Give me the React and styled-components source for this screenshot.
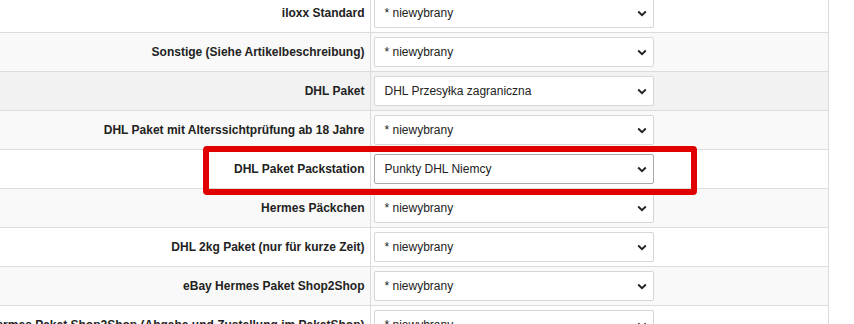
import React from 'react';
import styled, { createGlobalStyle } from 'styled-components';

const GlobalStyle = createGlobalStyle`
  html, body {
    margin: 0;
    padding: 0;
    background: #fff;
    overflow: hidden;
  }
  body {
    font-family: "Liberation Sans", Arial, Helvetica, sans-serif;
    color: #222;
  }
`;

const Page = styled.div`
  position: relative;
  width: 869px;
  margin-left: -40px;
  margin-top: -6px;
`;

const Table = styled.table`
  width: 100%;
  table-layout: fixed;
  border-collapse: collapse;
  border-right: 1px solid #dcdcdc;
`;

const LabelCol = styled.col`
  width: 410px;
`;

const Row = styled.tr`
  background: ${props => props.$bg || '#fff'};
  border-bottom: 1px solid #dcdcdc;
`;

const LabelCell = styled.td`
  height: 38px;
  padding: 0 5px 0 0;
  text-align: right;
  font-weight: bold;
  font-size: 12px;
  color: #222;
  white-space: nowrap;
  overflow: hidden;
  direction: rtl;
  vertical-align: middle;
  border-right: 1px solid #dcdcdc;
`;

const LabelText = styled.span`
  direction: ltr;
  unicode-bidi: isolate;
`;

const ValueCell = styled.td`
  height: 38px;
  padding: 0 0 0 3px;
  vertical-align: middle;
`;

const SelectBox = styled.div`
  box-sizing: border-box;
  width: 280px;
  height: 30px;
  display: flex;
  align-items: center;
  justify-content: space-between;
  padding: 0 6px 0 10px;
  background: #fff;
  border: 1px solid ${props => (props.$active ? '#a9a9a9' : '#d6d6d6')};
  border-radius: 2px;
  font-size: 12px;
  color: #222;
`;

const Highlight = styled.div`
  position: absolute;
  left: 243px;
  top: 152px;
  width: 494px;
  height: 49px;
  box-sizing: border-box;
  border: 6px solid #e00000;
  border-radius: 4px;
  pointer-events: none;
`;

const Chevron = () => (
  <svg width="10" height="7" viewBox="0 0 10 7">
    <polyline points="1.2,1.5 5,5.2 8.8,1.5" fill="none" stroke="#222" strokeWidth="1.9" />
  </svg>
);

const rows = [
  { label: 'iloxx Standard', value: '* niewybrany', bg: '#fff' },
  { label: 'Sonstige (Siehe Artikelbeschreibung)', value: '* niewybrany', bg: '#f9f9f9' },
  { label: 'DHL Paket', value: 'DHL Przesyłka zagraniczna', bg: '#f2f2f2' },
  { label: 'DHL Paket mit Alterssichtprüfung ab 18 Jahre', value: '* niewybrany', bg: '#f9f9f9' },
  { label: 'DHL Paket Packstation', value: 'Punkty DHL Niemcy', bg: '#fff', active: true },
  { label: 'Hermes Päckchen', value: '* niewybrany', bg: '#f9f9f9' },
  { label: 'DHL 2kg Paket (nur für kurze Zeit)', value: '* niewybrany', bg: '#fff' },
  { label: 'eBay Hermes Paket Shop2Shop', value: '* niewybrany', bg: '#f9f9f9' },
  { label: 'Hermes Paket Shop2Shop (Abgabe und Zustellung im PaketShop)', value: '* niewybrany', bg: '#fff' },
];

export default function App() {
  return (
    <>
      <GlobalStyle />
      <Page>
        <Table>
          <colgroup>
            <LabelCol />
            <col />
          </colgroup>
          <tbody>
            {rows.map(r => (
              <Row key={r.label} $bg={r.bg}>
                <LabelCell>
                  <LabelText>{r.label}</LabelText>
                </LabelCell>
                <ValueCell>
                  <SelectBox $active={r.active}>
                    <span>{r.value}</span>
                    <Chevron />
                  </SelectBox>
                </ValueCell>
              </Row>
            ))}
          </tbody>
        </Table>
        <Highlight />
      </Page>
    </>
  );
}
